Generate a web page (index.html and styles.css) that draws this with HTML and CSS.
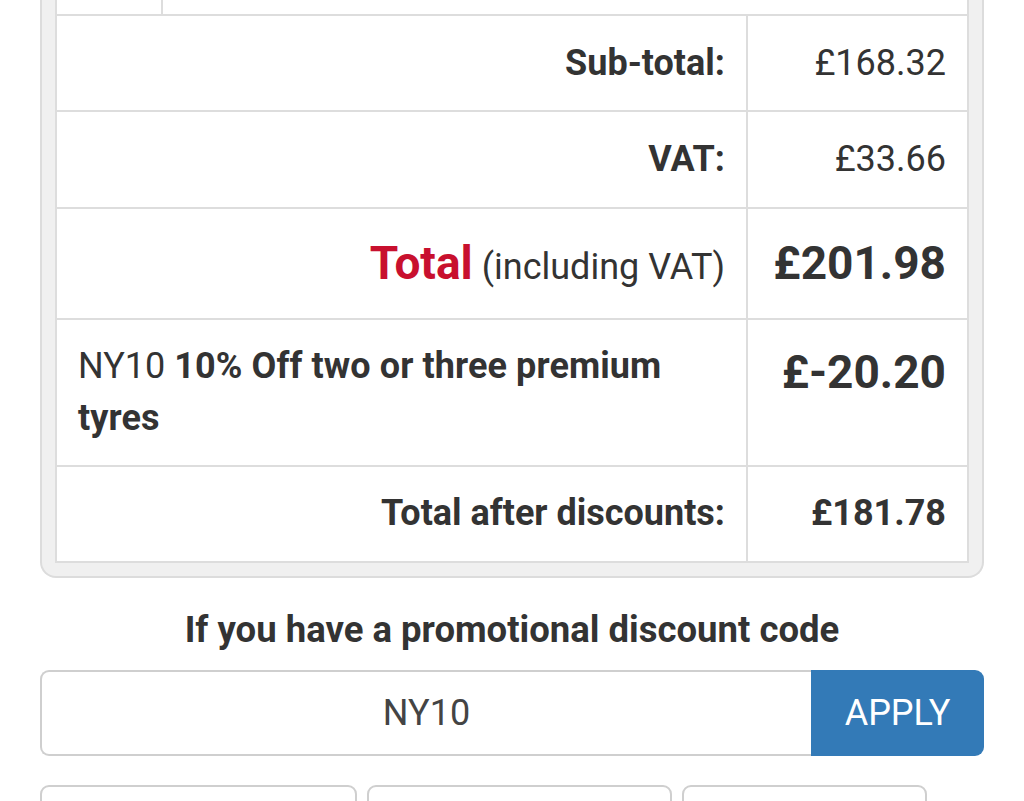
FILE: index.html
```html
<!DOCTYPE html>
<html lang="en">
<head>
<meta charset="utf-8">
<title>Basket totals</title>
<link rel="stylesheet" href="styles.css">
</head>
<body>
<div class="page">
  <div class="panel">
    <table class="totals">
      <colgroup>
        <col class="c1">
        <col class="c2">
        <col class="c3">
      </colgroup>
      <tr class="prev">
        <td></td>
        <td colspan="2"></td>
      </tr>
      <tr>
        <th colspan="2" class="label">Sub-total:</th>
        <td class="value">£168.32</td>
      </tr>
      <tr>
        <th colspan="2" class="label">VAT:</th>
        <td class="value">£33.66</td>
      </tr>
      <tr class="grand">
        <th colspan="2" class="label"><span class="red">Total</span> <span class="incl">(including VAT)</span></th>
        <td class="value big">£201.98</td>
      </tr>
      <tr class="discount">
        <td colspan="2" class="desc">NY10 <strong>10% Off two or three premium tyres</strong></td>
        <td class="value big top">£-20.20</td>
      </tr>
      <tr class="after">
        <th colspan="2" class="label">Total after discounts:</th>
        <td class="value bold">£181.78</td>
      </tr>
    </table>
  </div>

  <h2 class="promo-title">If you have a promotional discount code</h2>

  <form class="promo">
    <input class="promo-input" type="text" value="NY10">
    <button class="promo-btn" type="button">APPLY</button>
  </form>

  <div class="choices">
    <div class="choice w1"></div>
    <div class="choice w2"></div>
    <div class="choice w3"></div>
  </div>
</div>
</body>
</html>
```
FILE: styles.css
```css
* { box-sizing: border-box; }
html, body { margin: 0; padding: 0; background: #fff; }
body {
  font-family: Roboto, "Liberation Sans", Arial, sans-serif;
  color: #333;
  font-size: 36px;
  line-height: 1.4;
  overflow: hidden;
  height: 801px;
}
.page { padding: 0 40px; }

.panel {
  background: #f0f0f0;
  border: 2px solid #dcdcdc;
  border-top: 0;
  border-radius: 0 0 16px 16px;
  padding: 0 13px 13px;
}
.totals {
  width: 100%;
  border-collapse: collapse;
  background: #fff;
  table-layout: fixed;
}
.c1 { width: 106px; }
.c3 { width: 221px; }
.totals td, .totals th {
  border: 2px solid #dddddd;
  padding: 22px 21px;
  vertical-align: middle;
}
.totals tr.prev td { border-top: 0; height: 15px; padding: 0; }
.totals tr.grand th, .totals tr.grand td { padding-bottom: 23px; }
.totals tr.after th, .totals tr.after td { padding-top: 21px; padding-bottom: 22px; }
.label { text-align: right; font-weight: 700; }
.value { text-align: right; font-weight: 400; }
.value.bold { font-weight: 700; }
.value.big { font-weight: 700; font-size: 46px; }
.totals .value.top { vertical-align: top; padding-top: 20px; padding-bottom: 21px; }
.grand .label { font-weight: 400; }
.red { color: #c8102e; font-weight: 700; font-size: 46px; }
.incl { font-weight: 400; }
.totals .desc { text-align: left; vertical-align: top; padding-top: 20px; padding-bottom: 21px; line-height: 52px; }
.desc strong { font-weight: 700; letter-spacing: 0.1px; }

.promo-title {
  margin: 29px 0 17px;
  font-size: 36.5px;
  font-weight: 700;
  text-align: center;
  line-height: 46px;
}

.promo { display: flex; height: 86px; margin: 0; }
.promo-input {
  flex: 1;
  min-width: 0;
  border: 2px solid #cfcfcf;
  border-right: 0;
  border-radius: 9px 0 0 9px;
  font-family: inherit;
  font-size: 36px;
  color: #444;
  text-align: center;
  padding: 0;
  outline: none;
  background: #fff;
}
.promo-btn {
  width: 173px;
  border: 0;
  background: #337ab7;
  color: #fff;
  font-family: inherit;
  font-size: 36px;
  border-radius: 0 9px 9px 0;
  padding: 0;
}

.choices { display: flex; gap: 10px; margin-top: 29px; }
.choice {
  height: 60px;
  border: 2px solid #cfcfcf;
  border-radius: 9px;
  background: #fff;
}
.w1 { width: 317px; }
.w2 { width: 305px; }
.w3 { width: 245px; }
```
